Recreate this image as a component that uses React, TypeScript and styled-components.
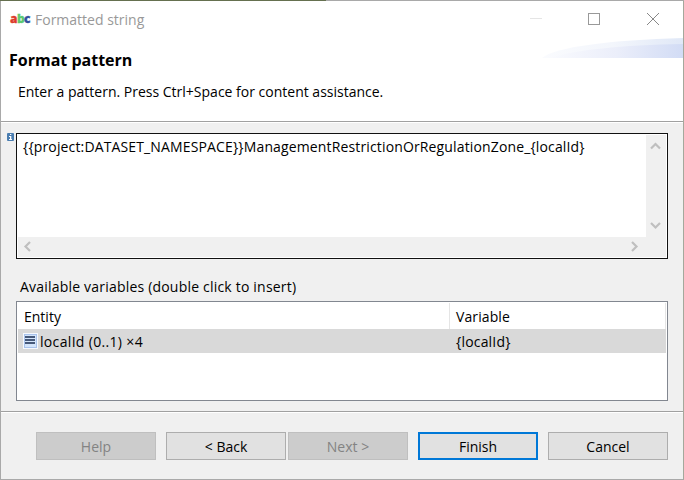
import React from "react";
import styled, { createGlobalStyle } from "styled-components";

const GlobalStyle = createGlobalStyle`
  * { box-sizing: border-box; }
  body { margin: 0; overflow: hidden; }
`;

const Window = styled.div`
  width: 684px;
  height: 480px;
  display: flex;
  flex-direction: column;
  background: #f0f0f0;
  border: 1px solid #a9a9a9;
  border-top: 0;
  border-right-color: #a4a89c;
  font-family: "Open Sans", "Noto Sans", sans-serif;
  font-size: 14px;
  line-height: 20px;
  color: #000;
`;

const TopEdge = styled.div`
  flex: none;
  height: 1px;
  margin: 0 -1px;
  background: linear-gradient(90deg, #65704f 326px, #a9a9a9 326px);
`;

const Header = styled.header`
  flex: none;
  height: 120px;
  background: #fff;
`;

const TitleBar = styled.div`
  height: 37px;
  display: flex;
  align-items: center;
`;

const AppIcon = styled.span`
  width: 26px;
  padding: 0 0 1px 9px;
  flex: none;
  font-weight: 800;
  font-size: 12px;
  letter-spacing: -0.6px;
  -webkit-text-stroke: 0.3px;
`;

const Tint = styled.span<{ $color: string }>`
  color: ${(p) => p.$color};
`;

const Text = styled.span<{ $spacing?: number }>`
  white-space: pre;
  letter-spacing: ${(p) => p.$spacing ?? 0}px;
`;

const WindowTitle = styled(Text)`
  flex: 1;
  padding-left: 8px;
  color: #999;
`;

const Controls = styled.div`
  display: grid;
  grid-template-columns: 58px 59px 12px;
  padding: 0 24px 1px 0;
`;

const Banner = styled.div`
  display: flex;
  justify-content: space-between;
  height: 36px;
`;

const Heading = styled.h1`
  margin: 0;
  padding: 11px 0 0 8px;
  font-size: 16px;
  line-height: 22px;
  font-weight: 700;
`;

const Description = styled.div`
  padding: 8px 0 0 17px;
`;

const Rule = styled.div<{ $top?: number }>`
  flex: none;
  height: 2px;
  margin-top: ${(p) => p.$top ?? 0}px;
  background: #fff;
  border-top: 1px solid #a0a0a0;
`;

const EditorRow = styled.div`
  display: flex;
  padding: 10px 15px 0 6px;
`;

const InfoSlot = styled.div`
  width: 9px;
  flex: none;
  display: flex;
`;

const Editor = styled.div`
  flex: 1;
  height: 126px;
  display: grid;
  grid-template-columns: 1fr 20px;
  grid-template-rows: 102px 20px;
  padding: 1px;
  border: 1px solid #111;
  background: #fff;
`;

const EditorText = styled.div`
  padding: 2px 5px 0;
`;

const VScroll = styled.div`
  display: flex;
  flex-direction: column;
  justify-content: space-between;
  align-items: center;
  padding: 6px 1px 6px 0;
  background: #f0f0f0;
`;

const HScroll = styled.div`
  grid-column: 1 / 3;
  display: flex;
  justify-content: space-between;
  align-items: center;
  padding: 0 26px 1px 4px;
  background: #f0f0f0;
`;

const Label = styled.div`
  padding: 18px 0 0 19px;
  height: 42px;
`;

const Table = styled.div`
  margin: 0 15px;
  height: 100px;
  padding: 1px;
  border: 1px solid #828790;
  background: #fff;
`;

const TableHead = styled.div`
  display: grid;
  grid-template-columns: 432px 1fr;
  height: 26px;
`;

const HeadCell = styled.div`
  padding: 4px 0 0 6px;
  border-right: 1px solid #e5e5e5;
`;

const TableRow = styled.div`
  display: grid;
  grid-template-columns: 432px 1fr;
  height: 24px;
  background: #d9d9d9;
`;

const Cell = styled.div`
  display: flex;
  align-items: center;
  padding: 2px 0 0 6px;
`;

const EntityCell = styled(Cell)`
  gap: 2px;
  padding-left: 5px;
`;

const RowIcon = styled.svg`
  margin-top: -3px;
`;

const Footer = styled.footer`
  display: flex;
  padding: 19px 15px 0 35px;
`;

const Button = styled.button<{ $primary?: boolean; $gap?: number }>`
  width: 120px;
  height: 28px;
  margin: 0 ${(p) => p.$gap ?? 10}px 0 0;
  padding: 2px 0 0;
  font: inherit;
  color: #000;
  background: #e1e1e1;
  border: ${(p) => (p.$primary ? "2px solid #0078d7" : "1px solid #adadad")};
  &:disabled {
    color: #838383;
    background: #ccc;
    border-color: #bfbfbf;
  }
`;

const Swoosh = () => (
  <svg width="141" height="20" viewBox="0 0 141 20">
    <defs>
      <linearGradient id="outer">
        <stop offset="0" stopColor="#fafbfe" />
        <stop offset="0.5" stopColor="#f3f6fc" />
        <stop offset="1" stopColor="#e0e8f7" />
      </linearGradient>
      <linearGradient id="inner">
        <stop offset="0" stopColor="#f9fafe" />
        <stop offset="0.5" stopColor="#ebeefa" />
        <stop offset="1" stopColor="#d2dcf5" />
      </linearGradient>
    </defs>
    <path d="M0 20C13 9 68 2 141 0V20Z" fill="url(#outer)" />
    <path d="M8 20C32 12 80 7 141 6V20Z" fill="url(#inner)" />
  </svg>
);

const chevrons = {
  up: "M1 7.5L5.5 3L10 7.5",
  down: "M1 3L5.5 7.5L10 3",
  left: "M8 1L3.5 5.5L8 10",
  right: "M3 1L7.5 5.5L3 10",
};

const Chevron = ({ to }: { to: keyof typeof chevrons }) => (
  <svg width="11" height="11" viewBox="0 0 11 11">
    <path d={chevrons[to]} fill="none" stroke="#bfbfbf" strokeWidth="2.2" />
  </svg>
);

export default function App() {
  return (
    <>
      <GlobalStyle />
      <Window>
        <TopEdge />
        <Header>
          <TitleBar>
            <AppIcon>
              <Tint $color="#dc3c2c">a</Tint>
              <Tint $color="#5cc870">b</Tint>
              <Tint $color="#34509c">c</Tint>
            </AppIcon>
            <WindowTitle>Formatted string</WindowTitle>
            <Controls>
              <svg width="12" height="12" shapeRendering="crispEdges">
                <path d="M0 5.5H12" stroke="#e5e5e5" />
              </svg>
              <svg width="12" height="12" shapeRendering="crispEdges">
                <rect x=".5" y=".5" width="11" height="11" fill="none" stroke="#999" />
              </svg>
              <svg width="12" height="12">
                <path d="M0 0L12 12M12 0L0 12" stroke="#888" />
              </svg>
            </Controls>
          </TitleBar>
          <Banner>
            <Heading>
              <Text>Format pattern</Text>
            </Heading>
            <Swoosh />
          </Banner>
          <Description>
            <Text>Enter a pattern. Press Ctrl+Space for content assistance.</Text>
          </Description>
        </Header>
        <Rule />
        <EditorRow>
          <InfoSlot>
            <svg width="7" height="8" viewBox="0 0 7 8">
              <rect width="7" height="8" rx="1" fill="#4a7db0" />
              <path d="M3 1h1.3v1H3zM2 3h2.3v3H5v1H2V6h1V4H2z" fill="#fff" />
            </svg>
          </InfoSlot>
          <Editor>
            <EditorText>
              <Text $spacing={0.14}>
                {"{{project:DATASET_NAMESPACE}}ManagementRestrictionOrRegulationZone_{localId}"}
              </Text>
            </EditorText>
            <VScroll>
              <Chevron to="up" />
              <Chevron to="down" />
            </VScroll>
            <HScroll>
              <Chevron to="left" />
              <Chevron to="right" />
            </HScroll>
          </Editor>
        </EditorRow>
        <Label>
          <Text $spacing={0.2}>Available variables (double click to insert)</Text>
        </Label>
        <Table>
          <TableHead>
            <HeadCell>
              <Text>Entity</Text>
            </HeadCell>
            <HeadCell>
              <Text $spacing={0.1}>Variable</Text>
            </HeadCell>
          </TableHead>
          <TableRow>
            <EntityCell>
              <RowIcon width="15" height="16" viewBox="0 0 15 16">
                <rect width="15" height="16" fill="#f5f8fd" />
                <rect x="1" y="1" width="13" height="14" fill="#a9c3ec" />
                <rect x="2" y="2" width="11" height="12" fill="#d3e4fa" />
                <path
                  d="M2 4H12M2 7H12M2 10H12"
                  stroke="#46597a"
                  strokeWidth="2"
                  shapeRendering="crispEdges"
                />
              </RowIcon>
              <Text $spacing={0.33}>localId (0..1) ×4</Text>
            </EntityCell>
            <Cell>
              <Text $spacing={0.18}>{"{localId}"}</Text>
            </Cell>
          </TableRow>
        </Table>
        <Rule $top={10} />
        <Footer>
          <Button disabled>Help</Button>
          <Button $gap={2}>&lt; Back</Button>
          <Button disabled>Next &gt;</Button>
          <Button $primary>Finish</Button>
          <Button $gap={0}>Cancel</Button>
        </Footer>
      </Window>
    </>
  );
}
